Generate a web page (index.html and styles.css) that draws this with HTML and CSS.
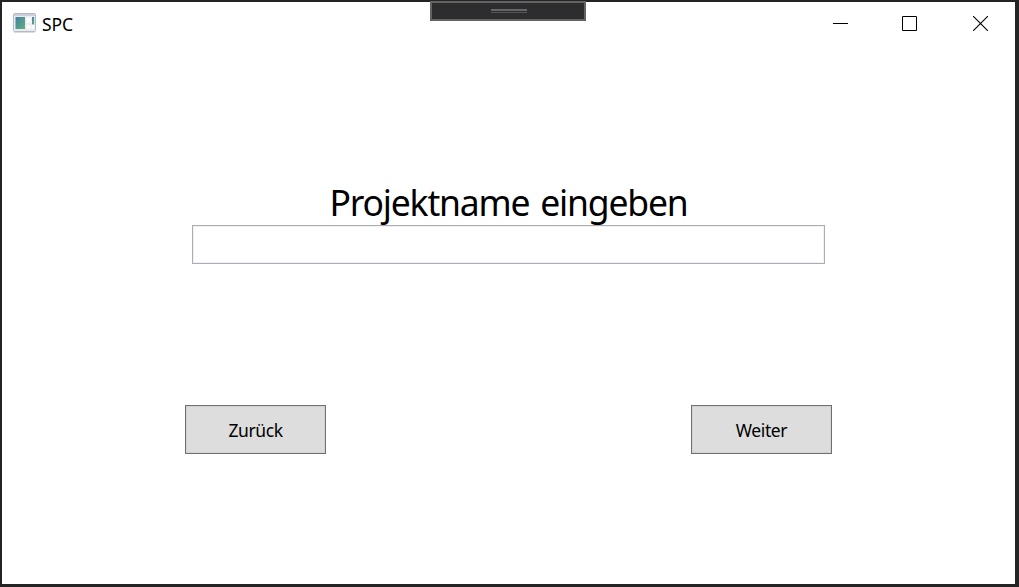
FILE: index.html
```html
<!DOCTYPE html>
<html lang="de">
<head>
<meta charset="utf-8">
<title>SPC</title>
<link rel="stylesheet" href="styles.css">
</head>
<body>
<div class="window">
  <header class="titlebar">
    <svg class="app-icon" width="23" height="20" viewBox="0 0 23 20">
      <defs>
        <linearGradient id="pane" x1="0" y1="0" x2="1" y2="1">
          <stop offset="0" stop-color="#437fa5"/>
          <stop offset="1" stop-color="#62b07d"/>
        </linearGradient>
      </defs>
      <rect x=".5" y=".5" width="22" height="18" rx="1" fill="#e9ebef" stroke="#b4bac5"/>
      <path d="M1 2h21" stroke="#cbd0da" stroke-width="2"/>
      <path d="M1 19.5h21" stroke="#d9dce2"/>
      <rect x="2.5" y="4" width="9.5" height="12" fill="url(#pane)"/>
      <path d="M13.5 4h4v6h-4zM13.5 12h4v4h-4zM18.5 4h3v12h-3z" fill="#fafafa"/>
      <rect x="19" y="4" width="2.2" height="7.5" fill="url(#pane)"/>
    </svg>
    <span class="title">SPC</span>
    <div class="controls">
      <svg width="15" height="15" viewBox="0 0 15 15"><path d="M0 7.5h15" stroke="#000"/></svg>
      <svg width="15" height="15" viewBox="0 0 15 15"><path d="M.5 .5h14v14H.5z" fill="none" stroke="#000"/></svg>
      <svg class="close" width="15" height="15" viewBox="0 0 15 15"><path d="M0 0l15 15M15 0L0 15" stroke="#000" stroke-width="1.1"/></svg>
    </div>
  </header>
  <main class="content">
    <label class="heading" for="project">Projektname eingeben</label>
    <input class="field" id="project" type="text">
    <div class="actions">
      <button class="button" type="button">Zurück</button>
      <button class="button" type="button">Weiter</button>
    </div>
  </main>
</div>
<div class="debug-bar"><span class="grip"></span></div>
</body>
</html>
```
FILE: styles.css
```css
* { box-sizing: border-box; }
body {
  margin: 0;
  height: 587px;
  padding: 2px 4px 3px 2px;
  background: #242425;
  font-family: "Segoe UI", "Noto Sans", sans-serif;
  color: #000;
  overflow: hidden;
}
.window {
  height: 582px;
  background: #fff;
  display: flex;
  flex-direction: column;
}
.titlebar {
  height: 43px;
  display: flex;
  align-items: center;
  padding: 0 27px 0 11px;
}
.app-icon { margin-top: -1px; }
.title {
  margin-left: 6px;
  font-size: 17.5px;
  line-height: 24px;
  letter-spacing: -0.1px;
}
.controls {
  margin-left: auto;
  display: flex;
  gap: 54px;
}
.controls svg { display: block; }
.controls .close { margin-left: 2px; }
.content {
  display: flex;
  flex-direction: column;
  align-items: center;
  padding-top: 132px;
}
.heading {
  height: 48px;
  font-size: 35.5px;
  line-height: 50px;
  letter-spacing: -1.2px;
  word-spacing: 3px;
  white-space: nowrap;
}
.field {
  width: 633px;
  height: 39px;
  border: 1px solid #abadb3;
  border-radius: 0;
  background: transparent;
  box-shadow: inset 0 0 0 1px #f1f1f5;
  padding: 0 6px;
  font: inherit;
  font-size: 18px;
  outline: none;
}
.actions {
  width: 647px;
  margin-top: 141px;
  display: flex;
  justify-content: space-between;
}
.button {
  width: 141px;
  height: 49px;
  padding: 0;
  border: 1px solid #707070;
  border-radius: 0;
  background: #ddd;
  box-shadow: inset 0 0 0 1px #d2d2d2;
  color: #000;
  font-family: inherit;
  font-size: 17.5px;
  line-height: 24px;
  letter-spacing: -0.4px;
}
.debug-bar {
  position: absolute;
  left: 430px;
  top: 1px;
  width: 156px;
  height: 20px;
  border: 2px solid #646364;
  background: #2d2d2f;
  display: flex;
  justify-content: center;
  padding: 6px 0 0 2px;
}
.grip {
  width: 36px;
  height: 4px;
  border-top: 2px solid #656565;
  border-bottom: 1px solid #555;
}
```
